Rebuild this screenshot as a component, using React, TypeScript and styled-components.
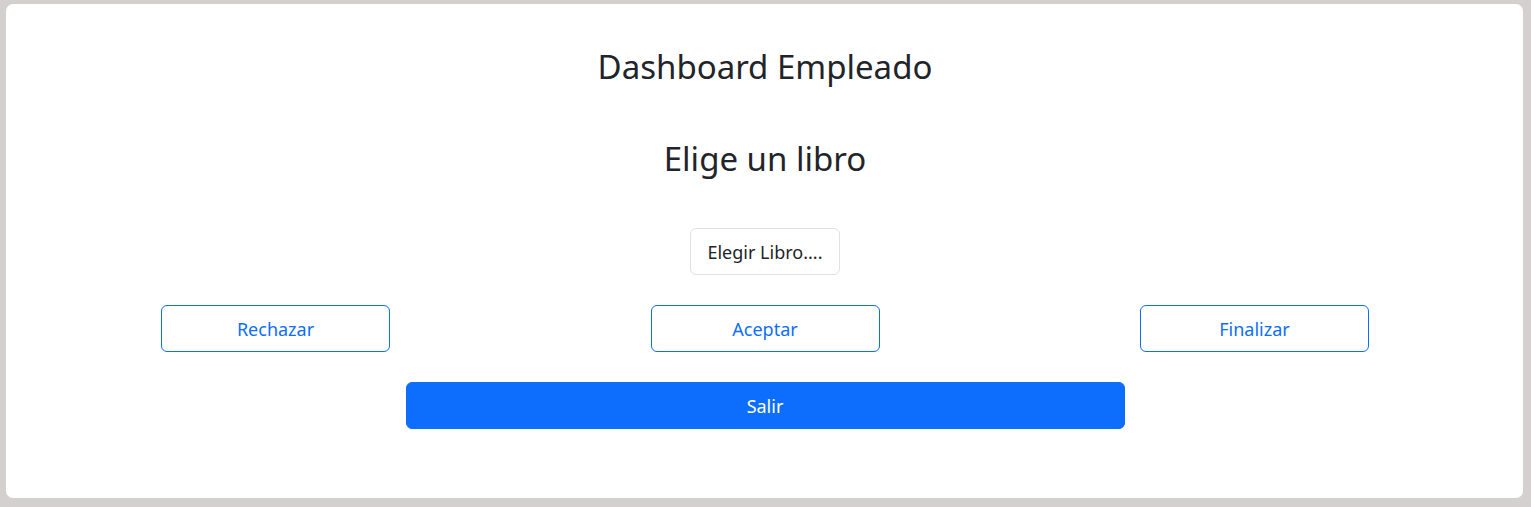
import React from 'react';
import styled, { createGlobalStyle } from 'styled-components';

const GlobalStyle = createGlobalStyle`
    html, body {
        margin: 0;
        padding: 0;
        background: #d3d0cf;
    }
    body {
        font-family: "Noto Sans", "Open Sans", sans-serif;
        color: #212529;
    }
`;

const Page = styled.div`
    padding: 4px 8px 9px 6px;
`;

const Card = styled.div`
    background: #ffffff;
    border-radius: 7px;
    padding: 44px 24px 69px 25px;
    display: flex;
    flex-direction: column;
    align-items: center;
`;

const Title = styled.h2<{ $gap?: number }>`
    margin: 0;
    margin-top: ${p => p.$gap ?? 0}px;
    font-size: 33px;
    font-weight: 400;
    line-height: 38px;
    text-align: center;
`;

const ChooseButton = styled.button`
    margin-top: 50px;
    height: 47px;
    padding: 0 16px;
    font-family: inherit;
    font-size: 18px;
    color: #212529;
    background: #ffffff;
    border: 1px solid #dee2e6;
    border-radius: 6px;
`;

const ActionRow = styled.div`
    margin-top: 30px;
    width: 1208px;
    display: flex;
    justify-content: space-between;
`;

const Button = styled.button<{ $solid?: boolean }>`
    width: ${p => (p.$solid ? 719 : 229)}px;
    height: 47px;
    font-family: inherit;
    font-size: 18px;
    border-radius: 6px;
    border: 1px solid #0d6efd;
    color: ${p => (p.$solid ? '#ffffff' : '#0d6efd')};
    background: ${p => (p.$solid ? '#0d6efd' : '#ffffff')};
`;

const ExitButton = styled(Button)`
    margin-top: 30px;
`;

const App = () => {
    return (
        <>
            <GlobalStyle />
            <Page>
                <Card>
                    <Title>Dashboard Empleado</Title>
                    <Title $gap={54}>Elige un libro</Title>
                    <ChooseButton>Elegir Libro....</ChooseButton>
                    <ActionRow>
                        <Button>Rechazar</Button>
                        <Button>Aceptar</Button>
                        <Button>Finalizar</Button>
                    </ActionRow>
                    <ExitButton $solid>Salir</ExitButton>
                </Card>
            </Page>
        </>
    );
};

export default App;
